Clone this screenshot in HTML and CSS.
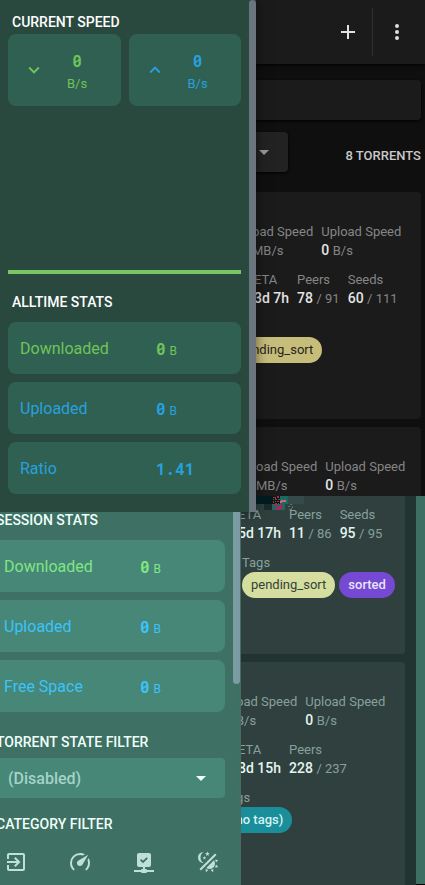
FILE: index.html
```html
<!DOCTYPE html>
<html lang="en">
<head>
<meta charset="utf-8">
<meta name="viewport" content="width=device-width, initial-scale=1">
<title>Torrents</title>
<link rel="stylesheet" href="styles.css">
</head>
<body>
<div class="page">
  <main class="content">
    <section class="dark">
      <header class="appbar">
        <button class="icon-btn" aria-label="Add torrent"><svg viewBox="0 0 24 24"><path d="M19 13h-6v6h-2v-6H5v-2h6V5h2v6h6z"/></svg></button>
        <span class="divider"></span>
        <button class="icon-btn" aria-label="Menu"><svg viewBox="0 0 24 24"><path d="M12 16a2 2 0 1 1 0 4 2 2 0 0 1 0-4m0-6a2 2 0 1 1 0 4 2 2 0 0 1 0-4m0-6a2 2 0 1 1 0 4 2 2 0 0 1 0-4"/></svg></button>
      </header>
      <div class="list">
        <input class="search" type="text" aria-label="Search">
        <div class="toolbar">
          <div class="sort">
            <select aria-label="Sort by"><option></option></select>
            <svg class="caret" viewBox="0 0 24 24"><path d="M7 10l5 5 5-5z"/></svg>
          </div>
          <span class="count">8 TORRENTS</span>
        </div>
        <article class="card">
          <div class="row">
            <div class="stat"><span class="label">Download Speed</span><span class="unit">MB/s</span></div>
            <div class="stat"><span class="label">Upload Speed</span><span class="value">0 <small>B/s</small></span></div>
          </div>
          <div class="row indent-l">
            <div class="stat"><span class="label">ETA</span><span class="value">3d 7h</span></div>
            <div class="stat"><span class="label">Peers</span><span class="value">78 <small>/ 91</small></span></div>
            <div class="stat"><span class="label">Seeds</span><span class="value">60 <small>/ 111</small></span></div>
          </div>
          <div class="tags">
            <span class="label">Tags</span>
            <div class="chips chips-a"><span class="chip sand">pending_sort</span></div>
          </div>
        </article>
        <article class="card card-head">
          <div class="row indent-m">
            <div class="stat"><span class="label">Download Speed</span><span class="unit">MB/s</span></div>
            <div class="stat"><span class="label">Upload Speed</span><span class="value">0 <small>B/s</small></span></div>
          </div>
        </article>
      </div>
    </section>
    <section class="tinted">
      <div class="list">
        <article class="card card-tail">
          <div class="row indent-l">
            <div class="stat"><span class="label">ETA</span><span class="value">5d 17h</span></div>
            <div class="stat"><span class="label">Peers</span><span class="value">11 <small>/ 86</small></span></div>
            <div class="stat"><span class="label">Seeds</span><span class="value">95 <small>/ 95</small></span></div>
          </div>
          <div class="tags indent-t">
            <span class="label">Tags</span>
            <div class="chips"><span class="chip lime">pending_sort</span><span class="chip purple">sorted</span></div>
          </div>
        </article>
        <article class="card card-last">
          <div class="row">
            <div class="stat"><span class="label">Download Speed</span><span class="unit">B/s</span></div>
            <div class="stat"><span class="label">Upload Speed</span><span class="value">0 <small>B/s</small></span></div>
          </div>
          <div class="row indent-l">
            <div class="stat"><span class="label">ETA</span><span class="value">8d 15h</span></div>
            <div class="stat"><span class="label">Peers</span><span class="value">228 <small>/ 237</small></span></div>
          </div>
          <div class="tags indent-g">
            <span class="label">Tags</span>
            <div class="chips"><span class="chip teal">(no tags)</span></div>
          </div>
        </article>
      </div>
      <div class="edge"></div>
    </section>
  </main>

  <aside class="drawer">
    <section class="panel panel-top">
      <div class="panel-body">
        <h2 class="first">CURRENT SPEED</h2>
        <div class="speeds">
          <div class="speed green">
            <svg viewBox="0 0 24 24"><path d="M7.41 8.58L12 13.17l4.59-4.59L18 10l-6 6-6-6z"/></svg>
            <div><b>0</b><span>B/s</span></div>
          </div>
          <div class="speed blue">
            <svg viewBox="0 0 24 24"><path d="M7.41 15.41L12 10.83l4.59 4.58L18 14l-6-6-6 6z"/></svg>
            <div><b>0</b><span>B/s</span></div>
          </div>
        </div>
        <div class="chart"></div>
        <h2 class="spaced">ALLTIME STATS</h2>
        <div class="totals">
          <div class="total green"><span>Downloaded</span><span><b>0</b> <small>B</small></span></div>
          <div class="total blue"><span>Uploaded</span><span><b>0</b> <small>B</small></span></div>
          <div class="total blue"><span>Ratio</span><span><b>1.41</b></span></div>
        </div>
      </div>
      <div class="scroll"></div>
    </section>
    <section class="panel panel-bottom">
      <div class="panel-inner">
        <div class="panel-body">
          <h2>SESSION STATS</h2>
          <div class="totals">
            <div class="total green"><span>Downloaded</span><span><b>0</b> <small>B</small></span></div>
            <div class="total blue"><span>Uploaded</span><span><b>0</b> <small>B</small></span></div>
            <div class="total blue"><span>Free Space</span><span><b>0</b> <small>B</small></span></div>
          </div>
          <h2 class="filter"><label for="state">TORRENT STATE FILTER</label></h2>
          <div class="state">
            <select id="state"><option>(Disabled)</option></select>
            <svg class="caret" viewBox="0 0 24 24"><path d="M7 10l5 5 5-5z"/></svg>
          </div>
          <h2 class="category">CATEGORY FILTER</h2>
        </div>
        <div class="scroll scroll-end"></div>
      </div>
      <nav class="actions">
        <button aria-label="Log out"><svg viewBox="0 0 24 24"><path d="M19,3H5C3.89,3 3,3.89 3,5V9H5V5H19V19H5V15H3V19A2,2 0 0,0 5,21H19A2,2 0 0,0 21,19V5C21,3.89 20.1,3 19,3M10.08,15.58L11.5,17L16.5,12L11.5,7L10.08,8.41L12.67,11H3V13H12.67L10.08,15.58Z"/></svg></button>
        <button aria-label="Speed limits"><svg viewBox="0 0 24 24"><path d="M12,16A3,3 0 0,1 9,13C9,11.88 9.61,10.9 10.5,10.39L20.21,4.77L14.68,14.35C14.18,15.33 13.17,16 12,16M12,3C13.81,3 15.5,3.5 16.97,4.32L14.87,5.53C14,5.19 13,5 12,5A8,8 0 0,0 4,13C4,15.21 4.89,17.21 6.34,18.65C6.74,19.04 6.74,19.67 6.35,20.06C5.96,20.45 5.32,20.45 4.93,20.07C3.12,18.26 2,15.76 2,13A10,10 0 0,1 12,3M22,13C22,15.76 20.88,18.26 19.07,20.07C18.68,20.45 18.05,20.45 17.66,20.06C17.27,19.67 17.27,19.04 17.66,18.65C19.11,17.2 20,15.21 20,13C20,12 19.81,11 19.46,10.1L20.67,8C21.5,9.5 22,11.18 22,13Z"/></svg></button>
        <button aria-label="Connection status"><svg viewBox="0 0 24 24"><path fill-rule="evenodd" d="M17,3A2,2 0 0,1 19,5V15A2,2 0 0,1 17,17H13V19H14A1,1 0 0,1 15,20H22V22H15A1,1 0 0,1 14,23H10A1,1 0 0,1 9,22H2V20H9A1,1 0 0,1 10,19H11V17H7C5.89,17 5,16.1 5,15V5A2,2 0 0,1 7,3H17M11,13.2L15.8,8.4L14.6,7.2L11,10.8L9.2,9L8,10.2Z"/></svg></button>
        <button aria-label="Toggle theme"><svg viewBox="0 0 24 24"><path d="M7.5,2C5.71,3.15 4.5,5.18 4.5,7.5C4.5,9.82 5.71,11.85 7.53,13C4.46,13 2,10.54 2,7.5A5.5,5.5 0 0,1 7.5,2M19.07,3.5L20.5,4.93L4.93,20.5L3.5,19.07L19.07,3.5M12.89,5.93L11.41,5L9.97,6L10.39,4.3L9,3.24L10.75,3.12L11.33,1.47L12,3.1L13.73,3.13L12.38,4.26L12.89,5.93M9.59,9.54L8.43,8.81L7.31,9.59L7.65,8.27L6.56,7.44L7.92,7.35L8.37,6.06L8.88,7.33L10.24,7.36L9.19,8.23L9.59,9.54M19,13.5A5.5,5.5 0 0,1 13.5,19C12.28,19 11.15,18.6 10.24,17.93L17.93,10.24C18.6,11.15 19,12.28 19,13.5M14.6,20.08L17.37,18.93L17.13,22.28L14.6,20.08M18.93,17.38L20.08,14.61L22.28,17.15L18.93,17.38M20.08,12.42L18.94,9.64L22.28,9.88L20.08,12.42M9.63,18.93L12.4,20.08L9.87,22.27L9.63,18.93Z"/></svg></button>
      </nav>
    </section>
    <svg class="noise" viewBox="0 0 48 16" shape-rendering="crispEdges" aria-hidden="true">
      <path fill="#02191d" d="M0 0h16v8H0z"/>
      <path fill="#182b2c" d="M8 8h8v6H8z"/>
      <path fill="#101517" d="M16 0h8v8h-8z"/>
      <path fill="#bb2038" d="M17 1h2v1h-2zM21 0h2v2h-2zM19 3h2v1h-2zM17 5h1v2h-1zM21 5h2v1h-2zM19 7h2v1h-2z"/>
      <path fill="#087b4c" d="M19 1h1v2h-1zM17 3h1v1h-1zM22 3h2v1h-2zM19 5h1v1h-1zM22 7h1v1h-1z"/>
      <path fill="#186b5d" d="M24 0h8v8h-8zM16 8h13v6H16z"/>
      <path fill="#cf6584" d="M25 4h5v2h-5zM24 5h2v2h-2z"/>
      <path fill="#b71e61" d="M18 8h3v2h-3zM21 10h5v3h-5zM19 13h4v1h-4zM24 9h3v2h-3z"/>
      <path fill="#354b49" d="M32 0h16v8H32z"/>
      <path fill="#60716e" d="M34 8h2v1h-2zM32 10h2v1h-2zM36 10h1v2h-1zM33 13h3v1h-3zM35 12h1v1h-1z"/>
    </svg>
  </aside>
</div>
</body>
</html>
```
FILE: styles.css
```css
* { box-sizing: border-box; }
body { margin: 0; background: #000; color: #fff; font-family: Roboto, sans-serif; font-size: 14px; }
button, input, select { font: inherit; color: inherit; border: 0; margin: 0; padding: 0; background: none; }
select { appearance: none; }
svg { display: block; fill: currentColor; }
h2 { margin: 0 0 12px; padding-left: 4px; font-size: 14px; font-weight: 500; line-height: 16px; }
.page { position: relative; display: grid; min-height: 100vh; overflow: hidden; }
.content { display: flex; flex-direction: column; min-width: 0; }

/* torrent list */
.dark { background: #0f0f0f; --card: #1b1b1b; --muted: #858585; --strong: #e4e4e4; }
.appbar { display: flex; justify-content: flex-end; align-items: center; gap: 12px; height: 64px; padding-right: 16px; background: #1b1b1b; box-shadow: 0 1px 4px #000; color: #e0e0e0; }
.icon-btn svg { width: 24px; height: 24px; }
.divider { width: 1px; height: 48px; background: #303030; }
.list { flex: 1; display: flex; flex-direction: column; padding-left: 192px; min-width: 0; }
.dark .list { padding: 16px 4px 0 192px; }
.search { height: 40px; border-radius: 4px; background: #1b1b1b; box-shadow: 0 1px 3px #000; }
.toolbar { display: flex; justify-content: space-between; align-items: center; height: 40px; margin: 12px 0 20px; }
.sort { position: relative; width: 96px; height: 40px; border-radius: 4px; background: #222; box-shadow: 0 1px 3px #000; color: #999; }
.sort select { width: 100%; height: 100%; }
.caret { position: absolute; right: 12px; top: 8px; width: 24px; height: 24px; pointer-events: none; }
.count { padding-top: 6px; font-size: 13px; font-weight: 500; color: #c9c9c9; }
.card { padding: 30px 8px 56px 24px; border-radius: 4px; background: var(--card); color: var(--muted); font-size: 13px; line-height: 19px; white-space: nowrap; }
.card + .card { margin-top: 8px; }
.card-head { padding-bottom: 1px; border-radius: 4px 4px 0 0; }
.card-tail { padding-top: 9px; border-radius: 0 0 4px 4px; }
.card-last { flex: 1; border-radius: 4px 4px 0 0; }
.row { display: flex; gap: 8px; margin-bottom: 10px; }
.card-head .row { margin-bottom: 0; }
.stat { display: flex; flex-direction: column; }
.label { display: block; }
.value { color: var(--strong); font-size: 14px; font-weight: 500; }
.value small { color: var(--muted); font-size: 13px; font-weight: 400; }
.indent-m { padding-left: 4px; }
.indent-l { padding-left: 38px; }
.indent-t { padding-left: 42px; }
.indent-g { padding-left: 22px; }
.unit { padding-left: 36px; }
.chips { display: flex; gap: 4px; }
.chips-a { padding-left: 13px; }
.chip { height: 26px; padding: 0 9px; border-radius: 13px; line-height: 26px; }
.sand { background: #c7bd7b; color: #25251c; }
.lime { background: #d5dd9f; color: #34423a; }
.purple { background: #7549d1; color: #e6e4fa; font-weight: 500; }
.teal { background: #1a8e9a; color: #d3f3f1; font-weight: 500; }

.tinted { display: flex; flex: 1; background: #223432; --card: #2f403f; --muted: #87a09b; --strong: #e2f5f0; }
.tinted .list { padding: 0 11px 0 176px; }
.edge { width: 9px; border-bottom: 5px solid #000; background: #3d7063; }

/* stats drawer */
.drawer { position: absolute; inset: 0 auto 0 0; display: flex; flex-direction: column; width: 256px; }
.panel { flex: none; }
.panel-top { display: flex; padding-bottom: 10px; background: #29483e; --tile: #306051; --green: #6fc45a; --blue: #27a0df; box-shadow: 0 0 12px #0008; }
.panel-body { flex: 1; min-width: 0; padding: 0 8px; }
.panel-top .panel-body { padding-bottom: 8px; }
.scroll { width: 7px; margin-bottom: -10px; border-radius: 4px 4px 0 0; background: #6a757d; }
.first { margin: 14px 0 4px; }
.spaced { margin-top: 20px; }
.green { color: var(--green); }
.blue { color: var(--blue); }
b { font: bold 16px "Roboto Mono", "DejaVu Sans Mono", monospace; }
.speeds { display: grid; grid-template-columns: 1fr 1fr; gap: 8px; }
.speed { display: flex; align-items: center; gap: 22px; height: 72px; padding-left: 15px; border-radius: 8px; background: var(--tile); }
.speed svg { width: 22px; height: 22px; }
.speed div { display: flex; flex-direction: column; align-items: center; gap: 5px; padding-top: 1px; font-size: 13px; }
.chart { height: 168px; border-bottom: 4px solid #79c662; }
.totals { display: grid; gap: 8px; }
.total { display: grid; grid-template-columns: 136px 1fr; align-items: center; height: 52px; padding: 0 12px; border-radius: 8px; background: var(--tile); font-size: 16px; }
.total small { font-size: 12px; }
.panel-bottom { flex: 1; width: 240px; overflow: hidden; background: #3e7063; box-shadow: 1px 0 #4a6a62; --tile: #468777; --green: #80e681; --blue: #3bc3fa; color: #effffa; }
.panel-inner { display: flex; margin-left: -16px; }
.scroll-end { height: 172px; border-radius: 0 0 4px 4px; background: #7c9ca4; }
.filter { margin: 22px 0 8px; }
.state { position: relative; height: 40px; border-radius: 4px; background: var(--tile); }
.state select { width: 100%; height: 100%; padding-left: 16px; font-size: 16px; font-weight: 500; color: #a4d3c7; }
.category { margin: 18px 0; }
.actions { display: grid; grid-template-columns: repeat(4, 64px); margin-left: -16px; color: #bee0d7; }
.actions svg { width: 24px; height: 24px; margin: 0 auto; }
.noise { position: absolute; left: 256px; top: 496px; width: 48px; height: 16px; }
```
